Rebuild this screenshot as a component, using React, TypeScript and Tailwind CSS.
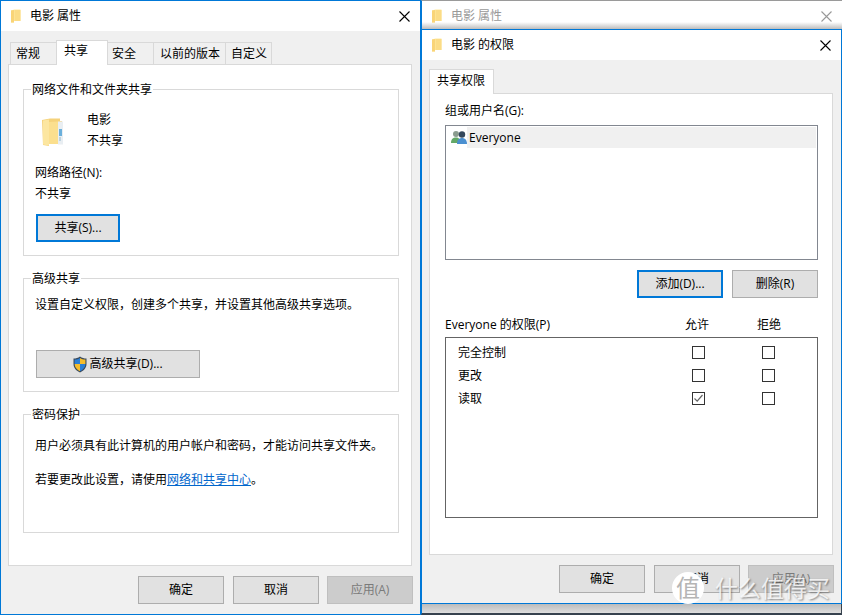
import type { ReactNode } from 'react';

const fontClass = "font-['Open_Sans','Noto_Sans_CJK_SC',sans-serif] text-[12px] leading-[16px] text-black";

function SmallFolder() {
  return (
    <svg width="10" height="14" viewBox="0 0 10 14" className="shrink-0">
      <path d="M0 1.5 L3.5 0.5 L9.5 0.5 L9.5 12 L3 12 L3 13.5 L0 13.5 Z" fill="#ffe9a2" />
      <path d="M0 1.5 L3 1 L3 13.5 L0 13.5 Z" fill="#f9d477" />
      <path d="M3.5 1 L9.5 1 L9.5 12 L3.5 12 Z" fill="#fbdc86" />
    </svg>
  );
}

function CloseIcon({ color = '#000' }: { color?: string }) {
  return (
    <svg width="11" height="11" viewBox="0 0 11 11" className="shrink-0">
      <path d="M0.5 0.5 L10.5 10.5 M10.5 0.5 L0.5 10.5" stroke={color} strokeWidth="1.1" fill="none" />
    </svg>
  );
}

function BigFolder() {
  return (
    <svg width="22" height="28" viewBox="0 0 22 28" className="shrink-0">
      <path d="M0 2 L8 0.5 L18 0.5 L18 3 L20 3 L20 26 L7 26 L7 28 L1 27 Z" fill="#f5d27a" />
      <path d="M1 2.5 L7 1.5 L7 27.5 L1 26.5 Z" fill="#fce6a0" />
      <path d="M7 4 L16 3.5 L16 26 L7 26 Z" fill="#fbdf8e" />
      <rect x="16" y="3.5" width="5" height="23" fill="#e9eef2" />
      <rect x="17" y="11" width="3" height="7" fill="#6bb0dc" />
      <rect x="17" y="19" width="2" height="4" fill="#bcd2df" />
    </svg>
  );
}

function Shield() {
  return (
    <svg width="14" height="17" viewBox="0 0 14 17" className="shrink-0">
      <path d="M7 0.5 C5 2 3 2.5 0.5 2.5 L0.5 8 C0.5 12 3.5 15 7 16.5 C10.5 15 13.5 12 13.5 8 L13.5 2.5 C11 2.5 9 2 7 0.5 Z" fill="#3a4a5c" />
      <path d="M7 2 C5.5 3 3.5 3.6 1.6 3.6 L1.6 8 L7 8 Z" fill="#2a7fd6" />
      <path d="M7 2 C8.5 3 10.5 3.6 12.4 3.6 L12.4 8 L7 8 Z" fill="#f6bd2b" />
      <path d="M1.6 8 L7 8 L7 15.2 C4 13.8 1.6 11.4 1.6 8 Z" fill="#f6bd2b" />
      <path d="M12.4 8 L7 8 L7 15.2 C10 13.8 12.4 11.4 12.4 8 Z" fill="#2a7fd6" />
    </svg>
  );
}

function UsersIcon() {
  return (
    <svg width="16" height="15" viewBox="0 0 16 15" className="shrink-0">
      <circle cx="5" cy="4" r="3" fill="#8b9c8f" />
      <path d="M0 13 C0 9 2 7.5 5 7.5 C8 7.5 9 9 9 13 Z" fill="#63a867" />
      <circle cx="11" cy="4.5" r="3.2" fill="#33475c" />
      <path d="M6 14 C6 10 8 8 11 8 C14 8 16 10 16 14 Z" fill="#4a8fd0" />
    </svg>
  );
}

function CheckBox({ checked = false }: { checked?: boolean }) {
  return (
    <div className="w-[13px] h-[13px] border border-[#333] bg-white flex items-center justify-center">
      {checked && (
        <svg width="11" height="11" viewBox="0 0 11 11">
          <path d="M1.5 5.5 L4.2 8.2 L9.5 2" stroke="#666" strokeWidth="1.2" fill="none" />
        </svg>
      )}
    </div>
  );
}

function Button({ children, focused, disabled, className = '' }: { children: ReactNode; focused?: boolean; disabled?: boolean; className?: string }) {
  const border = focused
    ? 'border-2 border-[#0078d7] bg-[#e1e1e1]'
    : disabled
      ? 'border border-[#bfbfbf] bg-[#cccccc] text-[#7a7a7a]'
      : 'border border-[#adadad] bg-[#e1e1e1]';
  return <div className={`h-[28px] flex items-center justify-center gap-[2px] ${border} ${className}`}>{children}</div>;
}

function Group({ title, height, children }: { title: string; height: string; children: ReactNode }) {
  return (
    <div className={`ml-[14px] w-[376px] border border-[#d9d9d9] ${height}`}>
      <div className="-mt-[8px] ml-[7px] w-fit px-[1px] bg-white">{title}</div>
      {children}
    </div>
  );
}

function Tab({ label, width, active }: { label: string; width: string; active?: boolean }) {
  return (
    <div
      className={`${width} flex border border-[#d9d9d9] -ml-px first:ml-0 ${
        active ? 'h-[25px] bg-white border-b-0 relative pt-[2px]' : 'h-[23px] bg-[#f0f0f0] pt-[3px]'
      }`}
    >
      {label}
    </div>
  );
}

function Title({ text, muted }: { text: string; muted?: boolean }) {
  return (
    <div className="h-[30px] shrink-0 bg-white flex items-center pl-[10px] pr-[10px]">
      <SmallFolder />
      <span className={`ml-[9px] ${muted ? 'text-[#999]' : ''}`}>{text}</span>
      <span className="ml-auto">
        <CloseIcon color={muted ? '#999' : '#000'} />
      </span>
    </div>
  );
}

function Footer({ className }: { className: string }) {
  return (
    <div className={`flex justify-end pr-[7px] ${className}`}>
      <Button className="w-[86px]">确定</Button>
      <Button className="w-[86px] ml-[9px]">取消</Button>
      <Button className="w-[86px] ml-[8px]" disabled>应用(A)</Button>
    </div>
  );
}

function PropertiesWindow() {
  return (
    <div className="w-[421px] h-[615px] shrink-0 border border-[#0078d7] flex flex-col bg-[#f0f0f0]">
      <Title text="电影 属性" />
      <div className="pt-[9px] pl-[7px]">
        <div className="flex items-end ml-[2px] h-[25px] relative z-10">
          <Tab label="常规" width="w-[47px] pl-[5px]" />
          <Tab label="共享" width="w-[52px] pl-[7px]" active />
          <Tab label="安全" width="w-[47px] pl-[4px]" />
          <Tab label="以前的版本" width="w-[73px] pl-[6px]" />
          <Tab label="自定义" width="w-[47px] pl-[5px]" />
        </div>
        <div className="-mt-px w-[404px] h-[502px] border border-[#d9d9d9] bg-white pt-[24px]">
          <Group title="网络文件和文件夹共享" height="h-[167px]">
            <div className="pl-[18px] pt-[20px] flex">
              <BigFolder />
              <div className="ml-[23px] -mt-[6px]">
                <div className="h-[21px]">电影</div>
                <div>不共享</div>
              </div>
            </div>
            <div className="pl-[11px] mt-[16px]">
              <div className="h-[21px]">网络路径(N):</div>
              <div>不共享</div>
              <Button focused className="w-[84px] mt-[12px] ml-px">共享(S)...</Button>
            </div>
          </Group>
          <div className="h-[22px]" />
          <Group title="高级共享" height="h-[114px]">
            <div className="pl-[11px] pt-[10px]">
              <div>设置自定义权限，创建多个共享，并设置其他高级共享选项。</div>
              <Button className="w-[164px] mt-[37px] ml-px">
                <Shield />
                高级共享(D)...
              </Button>
            </div>
          </Group>
          <div className="h-[22px]" />
          <Group title="密码保护" height="h-[119px]">
            <div className="pl-[11px] pt-[15px]">
              <div>用户必须具有此计算机的用户帐户和密码，才能访问共享文件夹。</div>
              <div className="mt-[18px]">
                若要更改此设置，请使用
                <span className="text-[#0066cc] underline">网络和共享中心</span>。
              </div>
            </div>
          </Group>
        </div>
        <Footer className="mt-[10px]" />
      </div>
    </div>
  );
}

function PermissionRow({ label, allow }: { label: string; allow?: boolean }) {
  return (
    <div className="h-[23px] flex items-center pl-[12px]">
      <span className="w-[234px]">{label}</span>
      <CheckBox checked={allow} />
      <div className="ml-[57px]">
        <CheckBox />
      </div>
    </div>
  );
}

function PermissionWindow() {
  return (
    <div className="w-[421px] h-[615px] shrink-0 flex flex-col bg-[#d9d9d9]">
      <div className="h-[29px] shrink-0 border-t border-l border-t-[#9a9a9a] border-l-[#0078d7] overflow-hidden relative">
        <Title text="电影 属性" muted />
        <div className="absolute inset-x-0 bottom-0 h-[7px] bg-gradient-to-b from-transparent to-[#bdbdbd]" />
      </div>
      <div className="h-[575px] shrink-0 border border-[#0078d7] flex flex-col bg-[#f0f0f0]">
        <Title text="电影 的权限" />
        <div className="pt-[9px] pl-[7px]">
          <div className="ml-0 w-[65px] h-[25px] bg-white border border-b-0 border-[#d9d9d9] pl-[7px] pt-[3px] relative z-10">共享权限</div>
          <div className="-mt-px w-[404px] h-[462px] border border-[#d9d9d9] bg-white pl-[15px] pt-[9px]">
            <div className="h-[22px]">组或用户名(G):</div>
            <div className="w-[373px] h-[135px] border border-[#828790] p-px">
              <div className="h-[21px] flex items-center pl-[4px]">
                <UsersIcon />
                <div className="flex-1 h-full bg-[#f0f0f0] pl-[2px] flex items-center">Everyone</div>
              </div>
            </div>
            <div className="flex justify-end w-[373px] mt-[10px]">
              <Button focused className="w-[86px]">添加(D)...</Button>
              <Button className="w-[86px] ml-[9px]">删除(R)</Button>
            </div>
            <div className="flex w-[373px] mt-[19px] h-[20px]">
              <span className="w-[240px]">Everyone 的权限(P)</span>
              <span className="w-[72px]">允许</span>
              <span>拒绝</span>
            </div>
            <div className="w-[373px] h-[181px] border border-[#646464] pt-[3px]">
              <PermissionRow label="完全控制" />
              <PermissionRow label="更改" />
              <PermissionRow label="读取" allow />
            </div>
          </div>
          <Footer className="mt-[10px]" />
        </div>
      </div>
      <div className="flex-1 bg-gradient-to-b from-[#bcbcbc] to-[#dedede] border-b-2 border-r border-[#36424e] border-l border-l-[#0078d7]" />
    </div>
  );
}

function Watermark() {
  return (
    <div className="absolute left-[672px] top-[572px] flex items-center pointer-events-none">
      <div className="w-[32px] h-[32px] rounded-full bg-white flex items-center justify-center text-[24px] leading-none text-[#b5b5b5]">值</div>
      <span className="ml-[11px] text-[23px] leading-[28px] text-white/80 [text-shadow:1px_1px_2px_rgba(0,0,0,0.45)]">什么值得买</span>
    </div>
  );
}

export default function App() {
  return (
    <div className={`relative w-[842px] h-[615px] flex overflow-hidden bg-white ${fontClass}`}>
      <PropertiesWindow />
      <PermissionWindow />
      <Watermark />
    </div>
  );
}
